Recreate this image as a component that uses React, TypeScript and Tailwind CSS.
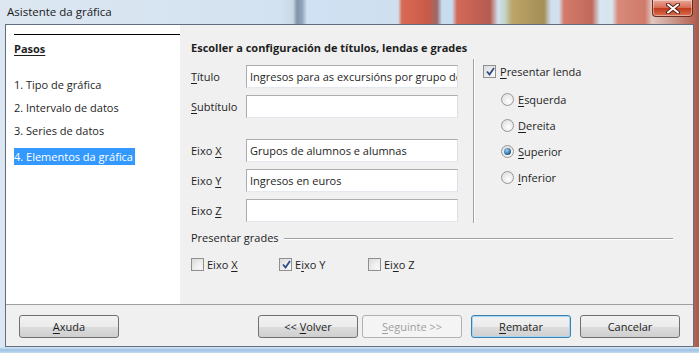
import React from "react";

const font = "font-['Open_Sans','Noto_Sans',sans-serif] text-[11px] leading-none text-[#1e1e1e]";

function U({ children }: { children: React.ReactNode }) {
    return <span className="underline underline-offset-2 decoration-1">{children}</span>;
}

function CheckBox({ checked }: { checked?: boolean }) {
    return (
        <span className="w-[13px] h-[13px] shrink-0 border border-[#8f8f8f] bg-[linear-gradient(135deg,#dcdcdc,#f8f8f8)] p-[2px] flex">
            <span className="flex-1 bg-[linear-gradient(135deg,#e2e2e2,#fbfbfb)] flex items-center justify-center">
                {checked && (
                    <svg width="9" height="9" viewBox="0 0 9 9">
                        <path d="M1 4.5 L3.5 7.5 L8 1" fill="none" stroke="#2a4c8c" strokeWidth="1.8" />
                    </svg>
                )}
            </span>
        </span>
    );
}

function Radio({ checked }: { checked?: boolean }) {
    return (
        <span className="w-[13px] h-[13px] shrink-0 rounded-full border border-[#979797] bg-[radial-gradient(circle_at_60%_65%,#ffffff,#d8d8d8)] flex items-center justify-center">
            {checked && <span className="w-[7px] h-[7px] rounded-full bg-[radial-gradient(circle_at_40%_35%,#9fd2f4,#1b5a8c_70%)]" />}
        </span>
    );
}

function Field({ label, value, className }: { label: React.ReactNode; value?: string; className?: string }) {
    return (
        <div className={`flex items-center ${className ?? ""}`}>
            <span className="w-[55px]">{label}</span>
            <div className="w-[212px] h-[23px] border border-[#abadb3] border-r-[#dbdfe6] border-b-[#e3e9ef] bg-white px-[3px] flex items-center overflow-hidden whitespace-nowrap">
                {value}
            </div>
        </div>
    );
}

function Button({ children, disabled, primary }: { children: React.ReactNode; disabled?: boolean; primary?: boolean }) {
    const border = primary ? "border-[#3c7fb1] shadow-[inset_0_0_0_1px_#a4d8f2]" : disabled ? "border-[#adb2b5]" : "border-[#707070]";
    const bg = disabled ? "bg-[#f4f4f4] text-[#a0a0a0]" : "bg-[linear-gradient(to_bottom,#f2f2f2_0%,#ebebeb_50%,#dddddd_51%,#cfcfcf_100%)]";
    return (
        <div className={`w-[100px] h-[23px] rounded-[3px] border ${border} ${bg} flex items-center justify-center whitespace-pre`}>
            {children}
        </div>
    );
}

export default function App() {
    return (
        <div
            className={`${font} w-[699px] h-[353px] overflow-hidden flex flex-col bg-[linear-gradient(to_right,#dce7f1_0px,#d3e2f1_280px,#c9d7e6_293px,#7f94a8_297px,#8ea3b8_302px,#cfe1f3_307px,#cfdfee_398px,#d86a55_402px,#c85a48_428px,#9a6a6a_437px,#c8dcef_442px,#c8dcef_452px,#d26a58_457px,#b65a50_490px,#cfe0f0_498px,#c4d4c8_505px,#bda468_512px,#a48e56_544px,#cfdfef_551px,#d0e0ee_559px,#d57a6a_564px,#c06a5c_592px,#d8e6f2_600px,#d8e4ee_612px,#d88a7a_618px,#d07a6a_645px,#e0c8c0_652px,#b86858_693px,#a85848_699px)]`}
        >
            <div className="h-[24px] shrink-0 flex items-start justify-between pl-[7px] pr-[6px]">
                <span className="mt-[6px] text-[11.5px] text-[#1a1a1a]">Asistente da gráfica</span>
                <div className="w-[41px] h-[17px] rounded-b-[4px] border border-t-0 border-[#6b2b20] bg-[linear-gradient(to_bottom,#e8a898_0%,#d86850_50%,#c0381c_51%,#d87050_100%)] shadow-[inset_0_0_0_1px_rgba(255,255,255,0.4)] flex items-center justify-center">
                    <svg width="14" height="11" viewBox="0 0 14 11">
                        <path d="M2 1.5 L12 9.5 M12 1.5 L2 9.5" stroke="#5a2418" strokeWidth="4" strokeLinecap="round" />
                        <path d="M2 1.5 L12 9.5 M12 1.5 L2 9.5" stroke="#ffffff" strokeWidth="2" strokeLinecap="round" />
                    </svg>
                </div>
            </div>

            <div className="mx-[5px] h-[323px] shrink-0 border border-[#5f6f80] bg-[#f0f0f0] flex flex-col">
                <div className="h-[280px] shrink-0 flex border-b border-[#a0a0a0]">
                    <aside className="w-[174px] bg-white pl-[8px] pt-[9px]">
                        <div className="border-t border-black pt-[8px]">
                            <div className="font-bold h-[14px]"><U>Pasos</U></div>
                            <div className="mt-[22px] flex flex-col gap-[9px]">
                                <div className="h-[14px]">1. Tipo de gráfica</div>
                                <div className="h-[14px]">2. Intervalo de datos</div>
                                <div className="h-[14px]">3. Series de datos</div>
                                <div className="h-[17px] w-fit pr-[2px] bg-[#3399ff] text-white flex items-center whitespace-nowrap">4. Elementos da gráfica</div>
                            </div>
                        </div>
                    </aside>

                    <section className="flex-1 pl-[11px] pt-[17px]">
                        <h2 className="font-bold h-[14px]">Escoller a configuración de títulos, lendas e grades</h2>
                        <div className="flex mt-[3px]">
                            <div className="pt-[6px]">
                                <Field label={<><U>T</U>ítulo</>} value="Ingresos para as excursións por grupo de alumnos e alumnas" />
                                <Field className="mt-[7px]" label={<><U>S</U>ubtítulo</>} />
                                <Field className="mt-[21px]" label={<>Eixo <U>X</U></>} value="Grupos de alumnos e alumnas" />
                                <Field className="mt-[7px]" label={<>Eixo <U>Y</U></>} value="Ingresos en euros" />
                                <Field className="mt-[7px]" label={<>Eixo <U>Z</U></>} />
                            </div>
                            <div className="ml-[15px] w-[2px] h-[164px] border-l border-[#a0a0a0] border-r border-r-white" />
                            <div className="pl-[8px] pt-[6px]">
                                <div className="flex items-center gap-[4px]">
                                    <CheckBox checked />
                                    <span><U>P</U>resentar lenda</span>
                                </div>
                                <div className="pl-[18px] mt-[15px] flex flex-col gap-[13px]">
                                    {[["E", "squerda"], ["D", "ereita"], ["S", "uperior"], ["I", "nferior"]].map(([a, b], i) => (
                                        <div key={a} className="flex items-center gap-[4px] h-[13px]">
                                            <Radio checked={i === 2} />
                                            <span><U>{a}</U>{b}</span>
                                        </div>
                                    ))}
                                </div>
                            </div>
                        </div>
                        <div className="mt-[9px] flex items-center gap-[5px] pr-[20px]">
                            <span className="h-[14px]">Presentar grades</span>
                            <div className="flex-1 border-t border-[#a0a0a0] border-b border-b-white" />
                        </div>
                        <div className="mt-[12px] flex items-center">
                            <div className="w-[88px] flex items-center gap-[3px]"><CheckBox /><span>Eixo <U>X</U></span></div>
                            <div className="w-[89px] flex items-center gap-[3px]"><CheckBox checked /><span>E<U>i</U>xo Y</span></div>
                            <div className="flex items-center gap-[3px]"><CheckBox /><span>Ei<U>x</U>o Z</span></div>
                        </div>
                    </section>
                </div>

                <div className="flex-1 flex items-center pl-[13px] pr-[12px] pt-[1px]">
                    <Button><U>A</U>xuda</Button>
                    <div className="ml-auto flex gap-[4px]">
                        <Button>{"<< "}<U>V</U>olver</Button>
                        <Button disabled><U>S</U>{"eguinte >>"}</Button>
                    </div>
                    <div className="ml-[9px] mr-[1px] flex gap-[9px]">
                        <Button primary><U>R</U>ematar</Button>
                        <Button>Cancelar</Button>
                    </div>
                </div>
            </div>

            <div className="flex-1 bg-[linear-gradient(to_bottom,#dbe8f5,#9cc2e4_50%,#c6dcf0)]" />
        </div>
    );
}
